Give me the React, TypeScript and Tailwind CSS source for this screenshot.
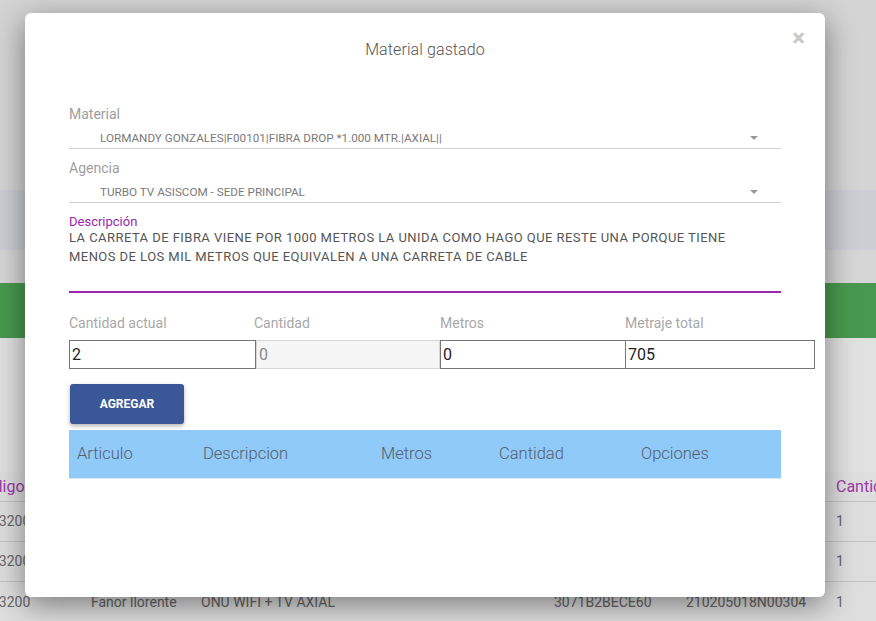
import React from "react";

export default function App() {
  return (
    <div
      className="relative w-[876px] h-[621px] overflow-hidden bg-[#d4d4d4]"
      style={{ fontFamily: "Roboto, 'Liberation Sans', sans-serif" }}
    >
      {/* background page (dimmed by overlay) */}
      <div className="flex flex-col w-full">
        <div className="h-[190px] bg-[#d4d4d4]" />
        <div className="h-[60px] bg-[#cdced4]" />
        <div className="h-[33px] bg-[#d6d6d6]" />
        <div className="h-[55px] bg-[#48994f]" />
        <div className="h-[134px] bg-[#e1e1e1]" />
        <div className="flex flex-col bg-[#dedede] text-[14px] text-[#666]">
          <div className="h-[30px] flex items-center relative border-b border-[#c4c4c4] text-[#9b3aa8] text-[16px]">
            <span className="absolute left-[-26px]">Codigo</span>
            <span className="absolute left-[836px]">Cantidad</span>
          </div>
          <div className="h-[40px] flex items-center relative border-b border-[#c4c4c4]">
            <span className="absolute left-[-9px]">93200</span>
            <span className="absolute left-[836px]">1</span>
          </div>
          <div className="h-[40px] flex items-center relative border-b border-[#c4c4c4]">
            <span className="absolute left-[-9px]">93200</span>
            <span className="absolute left-[836px]">1</span>
          </div>
          <div className="h-[40px] flex items-center relative">
            <span className="absolute left-[-9px]">93200</span>
            <span className="absolute left-[91px]">Fanor llorente</span>
            <span className="absolute left-[201px]">ONU WIFI + TV AXIAL</span>
            <span className="absolute left-[554px]">3071B2BECE60</span>
            <span className="absolute left-[686px]">210205018N00304</span>
            <span className="absolute left-[836px]">1</span>
          </div>
        </div>
      </div>

      {/* modal */}
      <div className="absolute left-[25px] top-[13px] w-[800px] h-[584px] bg-white rounded-[6px] shadow-[0_8px_30px_rgba(0,0,0,0.45)]">
        <div className="relative h-[72px] flex items-center justify-center">
          <span className="mt-[2px] text-[16px] text-[#555] font-light tracking-[0.1px]">Material gastado</span>
          <span className="absolute right-[20px] top-[13px] text-[#c8c8c8] text-[24px] font-bold leading-none">×</span>
        </div>

        <div className="px-[44px] pt-[19px] flex flex-col">
          {/* Material */}
          <div className="h-[20px] leading-[20px] text-[14px] text-[#9e9e9e]">Material</div>
          <div className="mt-[4px] h-[21px] border-b border-[#d0d0d0] flex items-center pl-[31px] pr-[23px] justify-between">
            <span className="text-[11.7px] text-[#7a7a7a] leading-[20px]">LORMANDY GONZALES|F00101|FIBRA DROP *1.000 MTR.|AXIAL||</span>
            <span className="w-0 h-0 border-l-[4px] border-r-[4px] border-t-[4px] border-l-transparent border-r-transparent border-t-[#999]" />
          </div>

          {/* Agencia */}
          <div className="mt-[9px] h-[20px] leading-[20px] text-[14px] text-[#9e9e9e]">Agencia</div>
          <div className="mt-[4px] h-[21px] border-b border-[#d0d0d0] flex items-center pl-[31px] pr-[23px] justify-between">
            <span className="text-[11.7px] text-[#7a7a7a] leading-[20px]">TURBO TV ASISCOM - SEDE PRINCIPAL</span>
            <span className="w-0 h-0 border-l-[4px] border-r-[4px] border-t-[4px] border-l-transparent border-r-transparent border-t-[#999]" />
          </div>

          {/* Descripcion */}
          <div className="mt-[10px] h-[18px] leading-[18px] text-[13px] text-[#9c27b0]">Descripción</div>
          <div className="-mt-[3px] h-[65px] border-b-2 border-[#9c27b0] text-[13px] leading-[19px] tracking-[0.45px] text-[#555] pr-[6px]">
            LA CARRETA DE FIBRA VIENE POR 1000 METROS LA UNIDA COMO HAGO QUE RESTE UNA PORQUE TIENE MENOS DE LOS MIL METROS QUE EQUIVALEN A UNA CARRETA DE CABLE
          </div>

          {/* cantidades */}
          <div className="mt-[20px] w-[746px] grid grid-cols-[185px_186px_185px_190px] text-[14px] text-[#a8a8a8] leading-[20px]">
            <span>Cantidad actual</span>
            <span>Cantidad</span>
            <span>Metros</span>
            <span>Metraje total</span>
          </div>
          <div className="mt-[7px] w-[746px] grid grid-cols-[187px_184px_186px_189px] h-[29px] text-[16px] text-[#222]">
            <div className="border border-[#767676] flex items-center px-[2px]">2</div>
            <div className="border border-[#d6d6d6] bg-[#f5f5f5] text-[#8a8a8a] flex items-center px-[2px]">0</div>
            <div className="border border-[#767676] flex items-center px-[2px]">0</div>
            <div className="border border-[#767676] border-l-0 flex items-center px-[2px]">705</div>
          </div>

          <div className="mt-[15px] pl-[1px]">
            <button className="w-[114px] h-[40px] rounded-[3px] bg-[#3a5898] text-white text-[12px] font-bold shadow-[0_2px_4px_rgba(0,0,0,0.3)]">
              AGREGAR
            </button>
          </div>

          <div className="mt-[6px] h-[49px] pt-[1px] bg-[#90caf9] border-b border-[#d8e6f0] flex items-center text-[16.5px] text-[#55606b] font-light">
            <span className="ml-[8px] w-[126px]">Articulo</span>
            <span className="w-[178px]">Descripcion</span>
            <span className="w-[118px]">Metros</span>
            <span className="w-[142px]">Cantidad</span>
            <span>Opciones</span>
          </div>
        </div>
      </div>
    </div>
  );
}
